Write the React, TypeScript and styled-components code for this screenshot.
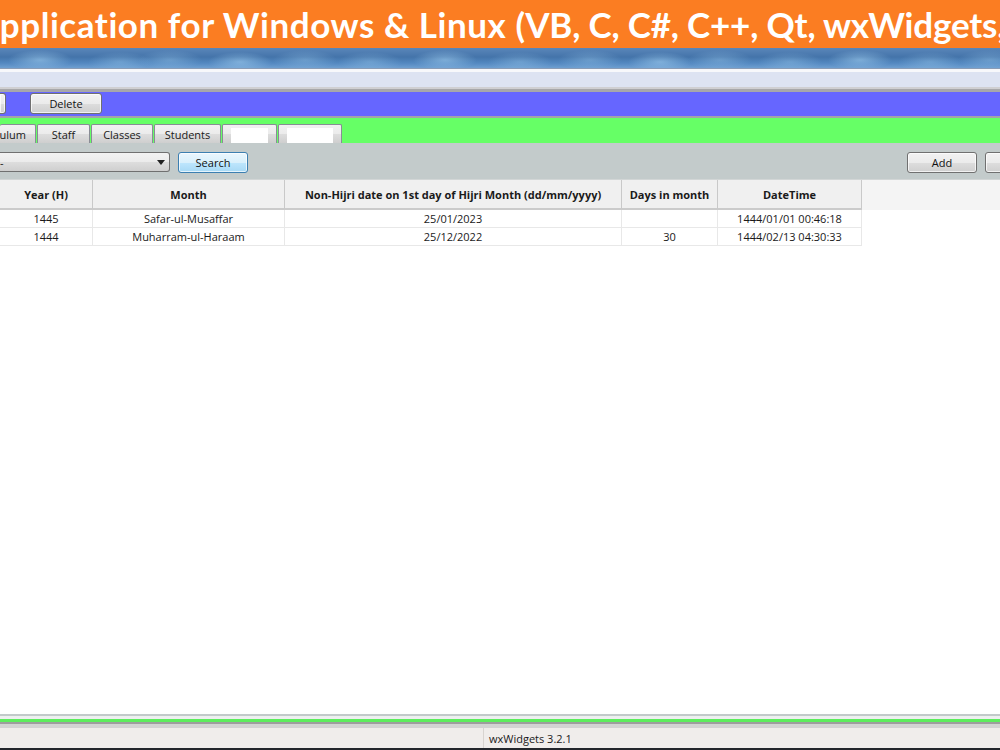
import React from "react";
import styled, { createGlobalStyle } from "styled-components";

const GlobalStyle = createGlobalStyle`
  html, body {
    margin: 0;
    padding: 0;
    overflow: hidden;
    background: #ffffff;
  }
  * {
    box-sizing: border-box;
  }
`;

const UI_FONT = `"Open Sans", "Liberation Sans", sans-serif`;

const Page = styled.div`
  width: 1000px;
  height: 750px;
  display: flex;
  flex-direction: column;
  overflow: hidden;
  font-family: ${UI_FONT};
  font-size: 11px;
  color: #1a1a1a;
`;

const Banner = styled.div`
  height: 48px;
  flex: none;
  background: #fb7d22;
  display: flex;
  align-items: center;
  overflow: hidden;
  white-space: nowrap;

  h1 {
    margin: 0 0 0 -25px;
    font-family: Lato, "Liberation Sans", sans-serif;
    font-weight: 700;
    font-size: 35px;
    letter-spacing: 0.55px;
    color: #ffffff;
  }

  /* the language list sits tighter in the original font */
  h1 span {
    letter-spacing: -0.2px;
  }
`;

// blurry aero glass blobs
const blobs = [40, 120, 170, 240, 305, 370, 445, 520, 590, 660, 720, 790, 860, 930, 990]
  .map((x, i) => `radial-gradient(ellipse 32px 10px at ${x}px ${i % 2 ? 14 : 12}px, rgba(165, 210, 242, ${i % 3 === 0 ? 0.55 : 0.35}), rgba(165, 210, 242, 0) 100%)`)
  .join(", ");

const TitleBar = styled.div`
  height: 20px;
  flex: none;
  background: ${blobs}, linear-gradient(180deg, #5a86b9 0%, #4474aa 45%, #5388c0 75%, #6e9fd1 100%);
`;

const MenuBar = styled.div`
  height: 24px;
  flex: none;
  border-top: 1px solid #8a9cb6;
  background: linear-gradient(180deg, #f7f8fb 0px, #f7f8fb 3px, #dde3f2 3px, #dde3f2 18px, #cfcfd2 18px, #cfcfd2 20px, #a7a7aa 20px);
`;

const Toolbar = styled.div`
  height: 26px;
  flex: none;
  background: #6666ff;
  display: flex;
  align-items: flex-start;
  padding-top: 1px;
  gap: 24px;
  border-bottom: 2px solid #a3a3a8;
`;

const Button = styled.button<{ $w: number; $clipped?: boolean; $accent?: boolean }>`
  width: ${(p) => p.$w}px;
  height: 21px;
  padding: 0;
  flex: none;
  font-family: ${UI_FONT};
  font-size: 11px;
  color: #111;
  border: 1px solid ${(p) => (p.$accent ? "#3c7fb1" : "#707070")};
  border-radius: 3px;
  ${(p) => p.$clipped && "border-left: none; border-top-left-radius: 0; border-bottom-left-radius: 0;"}
  background: ${(p) =>
    p.$accent
      ? "linear-gradient(180deg, #eaf6fd 0%, #d9f0fc 50%, #bee6fd 51%, #a7d9f5 100%)"
      : "linear-gradient(180deg, #f2f2f2 0%, #ebebeb 50%, #dddddd 51%, #cfcfcf 100%)"};
  box-shadow: inset 0 0 0 1px rgba(255, 255, 255, 0.7);
  cursor: pointer;
`;

const TabStrip = styled.div`
  height: 25px;
  flex: none;
  background: #66ff66;
  display: flex;
  align-items: flex-end;
`;

const Tab = styled.div<{ $w: number; $clipped?: boolean }>`
  width: ${(p) => p.$w}px;
  height: 19px;
  flex: none;
  display: flex;
  align-items: center;
  justify-content: ${(p) => (p.$clipped ? "flex-end" : "center")};
  padding: ${(p) => (p.$clipped ? "0 9px 0 0" : "0")};
  overflow: hidden;
  white-space: nowrap;
  border: 1px solid #898c95;
  border-bottom: none;
  ${(p) => p.$clipped && "border-left: none;"}
  margin-right: 1px;
  border-radius: 2px 2px 0 0;
  background: linear-gradient(180deg, #f2f2f2 0%, #ebebeb 50%, #dddddd 51%, #cfcfcf 100%);
  font-size: 11px;
  color: #1a1a1a;
`;

const BlankFace = styled.span`
  display: block;
  width: calc(100% - 16px);
  height: 15px;
  margin-top: 2px;
  background: #ffffff;
`;

const FilterBar = styled.div`
  height: 36px;
  flex: none;
  background: #c3cbcb;
  display: flex;
  align-items: flex-start;
  padding-top: 9px;
`;

const Combo = styled.div`
  width: 170px;
  height: 20px;
  border: 1px solid #707070;
  border-left: none;
  border-radius: 0 3px 3px 0;
  background: linear-gradient(180deg, #f2f2f2 0%, #ebebeb 50%, #dddddd 51%, #cfcfcf 100%);
  display: flex;
  align-items: center;
  justify-content: space-between;
  padding: 0 4px 0 0;
  margin-right: 8px;
  font-size: 11px;

  svg {
    display: block;
  }
`;

const Spacer = styled.div`
  flex: 1;
`;

const FilterActions = styled.div`
  display: flex;
  gap: 8px;
  margin-right: -55px;
`;

const GridArea = styled.div`
  flex: 1;
  background: #ffffff;
  display: flex;
  flex-direction: column;
`;

const COLS = [93, 192, 337, 96, 144];
const gridCols = COLS.map((c) => `${c}px`).join(" ");

const HeaderRow = styled.div`
  height: 31px;
  display: grid;
  grid-template-columns: ${gridCols} 1fr;
  background: #f4f4f4;
  border-top: 1px solid #d2d6d6;
`;

const HeaderCell = styled.div<{ $filler?: boolean }>`
  display: flex;
  align-items: center;
  justify-content: center;
  font-weight: 700;
  font-size: 11px;
  color: #1a1a1a;
  background: ${(p) => (p.$filler ? "#f4f4f4" : "#f0f0f0")};
  border-right: ${(p) => (p.$filler ? "none" : "1px solid #c9c9c9")};
  border-bottom: ${(p) => (p.$filler ? "none" : "2px solid #cbcbcb")};
  white-space: nowrap;
`;

const Row = styled.div`
  height: 18px;
  display: grid;
  grid-template-columns: ${gridCols};
`;

const Cell = styled.div`
  display: flex;
  align-items: center;
  justify-content: center;
  border-right: 1px solid #e8e8e8;
  border-bottom: 1px solid #e8e8e8;
  font-size: 11px;
  white-space: nowrap;
`;

const FrameBottom = styled.div`
  height: 14px;
  flex: none;
  background: linear-gradient(
    180deg,
    #c2caca 0px,
    #c2caca 2px,
    #eef0f0 2px,
    #eef0f0 5px,
    #5ded5d 5px,
    #5ded5d 8px,
    #9d9d9d 8px,
    #9d9d9d 10px,
    #d3d3d3 10px,
    #d3d3d3 14px
  );
`;

const StatusBar = styled.div`
  height: 22px;
  flex: none;
  background: #f0edeb;
  border-bottom: 2px solid #23262b;
  display: grid;
  grid-template-columns: 483px 1fr;
`;

const StatusPane = styled.div<{ $divider?: boolean }>`
  display: flex;
  align-items: center;
  padding-left: 5px;
  font-size: 11px;
  color: #1a1a1a;
  border-left: ${(p) => (p.$divider ? "1px solid #d8d4d0" : "none")};
`;

type Month = {
  year: string;
  month: string;
  date: string;
  days: string;
  stamp: string;
};

const months: Month[] = [
  { year: "1445", month: "Safar-ul-Musaffar", date: "25/01/2023", days: "", stamp: "1444/01/01 00:46:18" },
  { year: "1444", month: "Muharram-ul-Haraam", date: "25/12/2022", days: "30", stamp: "1444/02/13 04:30:33" },
];

const headers = ["Year (H)", "Month", "Non-Hijri date on 1st day of Hijri Month (dd/mm/yyyy)", "Days in month", "DateTime"];

const App: React.FC = () => {
  return (
    <Page>
      <GlobalStyle />
      <Banner>
        <h1>
          Application for Windows &amp; Linux <span>(VB, C, C#, C++, Qt, wxWidgets, MFC)</span>
        </h1>
      </Banner>
      <TitleBar />
      <MenuBar />

      <Toolbar>
        <Button $w={6} $clipped />
        <Button $w={72}>Delete</Button>
      </Toolbar>

      <TabStrip>
        <Tab $w={36} $clipped>Curriculum</Tab>
        <Tab $w={53}>Staff</Tab>
        <Tab $w={62}>Classes</Tab>
        <Tab $w={67}>Students</Tab>
        <Tab $w={55}><BlankFace /></Tab>
        <Tab $w={64}><BlankFace /></Tab>
      </TabStrip>

      <FilterBar>
        <Combo>
          <span>-</span>
          <svg width="8" height="5" viewBox="0 0 8 5">
            <path d="M0 0h8L4 5z" fill="#222" />
          </svg>
        </Combo>
        <Button $w={70} $accent>Search</Button>
        <Spacer />
        <FilterActions>
          <Button $w={70}>Add</Button>
          <Button $w={70}>Edit</Button>
        </FilterActions>
      </FilterBar>

      <GridArea>
        <HeaderRow>
          {headers.map((h) => (
            <HeaderCell key={h}>{h}</HeaderCell>
          ))}
          <HeaderCell $filler />
        </HeaderRow>
        {months.map((m) => (
          <Row key={m.month}>
            <Cell>{m.year}</Cell>
            <Cell>{m.month}</Cell>
            <Cell>{m.date}</Cell>
            <Cell>{m.days}</Cell>
            <Cell>{m.stamp}</Cell>
          </Row>
        ))}
      </GridArea>

      <FrameBottom />
      <StatusBar>
        <StatusPane />
        <StatusPane $divider>wxWidgets 3.2.1</StatusPane>
      </StatusBar>
    </Page>
  );
};

export default App;
